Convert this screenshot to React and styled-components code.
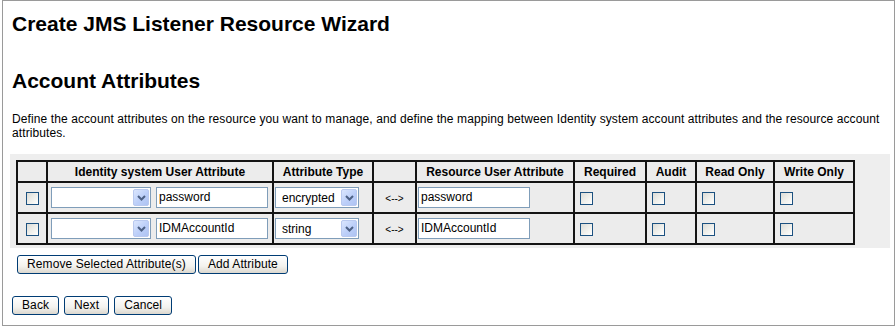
import React from "react";
import styled, { createGlobalStyle } from "styled-components";

// GLOBAL
const GlobalStyle = createGlobalStyle`
  html, body {
    margin: 0;
    padding: 0;
    background: #ffffff;
  }
  body {
    font-family: "Liberation Sans", Arial, sans-serif;
    font-size: 12px;
    color: #000000;
  }
`;

//DATA
const columns = [
  { label: "", width: 30 },
  { label: "Identity system User Attribute", width: 226 },
  { label: "Attribute Type", width: 100 },
  { label: "", width: 43 },
  { label: "Resource User Attribute", width: 158 },
  { label: "Required", width: 72 },
  { label: "Audit", width: 50 },
  { label: "Read Only", width: 78 },
  { label: "Write Only", width: 80 },
];

const rows = [
  { name: "password", type: "encrypted", resource: "password" },
  { name: "IDMAccountId", type: "string", resource: "IDMAccountId" },
];

const Chevron = () => (
  <svg width="9" height="6" viewBox="0 0 9 6">
    <path d="M1 1 L4.5 4.5 L8 1" fill="none" stroke="#4d6185" strokeWidth="2" />
  </svg>
);

const Select = ({ value, width }) => (
  <StyledSelect $width={width}>
    <span>{value}</span>
    <DropButton>
      <Chevron />
    </DropButton>
  </StyledSelect>
);

const App = () => {
  return (
    <>
      <GlobalStyle />
      <StyledFrame>
        <Title>Create JMS Listener Resource Wizard</Title>
        <SubTitle>Account Attributes</SubTitle>
        <Description>
          Define the account attributes on the resource you want to manage, and
          define the mapping between Identity system account attributes and the
          resource account attributes.
        </Description>

        <StyledPanel>
          <StyledTable>
            <colgroup>
              {columns.map((c, i) => (
                <col key={i} style={{ width: c.width }} />
              ))}
            </colgroup>
            <thead>
              <tr>
                {columns.map((c, i) => (
                  <HeadCell key={i}>{c.label}</HeadCell>
                ))}
              </tr>
            </thead>
            <tbody>
              {rows.map((r) => (
                <tr key={r.name}>
                  <Cell $center>
                    <Checkbox />
                  </Cell>
                  <Cell $pad="0 3px">
                    <Pair>
                      <Select value="" width={100} />
                      <TextField readOnly value={r.name} />
                    </Pair>
                  </Cell>
                  <Cell $pad="0 1px">
                    <Select value={r.type} width={84} />
                  </Cell>
                  <Cell $center>
                    <Arrow>&lt;--&gt;</Arrow>
                  </Cell>
                  <Cell $pad="0 1px">
                    <TextField readOnly value={r.resource} />
                  </Cell>
                  <Cell $pad="0 5px">
                    <Checkbox />
                  </Cell>
                  <Cell $pad="0 5px">
                    <Checkbox />
                  </Cell>
                  <Cell $pad="0 5px">
                    <Checkbox />
                  </Cell>
                  <Cell $pad="0 5px">
                    <Checkbox />
                  </Cell>
                </tr>
              ))}
            </tbody>
          </StyledTable>
        </StyledPanel>

        <ButtonRow $indent={7} $top={7} $gap={2}>
          <Button>Remove Selected Attribute(s)</Button>
          <Button>Add Attribute</Button>
        </ButtonRow>

        <ButtonRow $indent={2} $top={22} $gap={5}>
          <Button>Back</Button>
          <Button>Next</Button>
          <Button>Cancel</Button>
        </ButtonRow>
      </StyledFrame>
    </>
  );
};

const StyledFrame = styled.div`
  box-sizing: border-box;
  width: 893px;
  height: 326px;
  margin-left: 2px;
  border: 1px solid #9a9a9a;
  padding: 0 7px;
  overflow: hidden;
`;

const Title = styled.h1`
  margin: 12px 0 0 2px;
  font-size: 21px;
  line-height: 22px;
  font-weight: bold;
`;

const SubTitle = styled.h2`
  margin: 35px 0 0 2px;
  font-size: 21px;
  line-height: 22px;
  font-weight: bold;
`;

const Description = styled.p`
  margin: 20px 0 0 2px;
  width: 878px;
  font-size: 12px;
  line-height: 14px;
  letter-spacing: 0.1px;
`;

const StyledPanel = styled.div`
  margin-top: 14px;
  width: 880px;
  box-sizing: border-box;
  padding: 6px 6px 3px 6px;
  background: #eeeeee;
`;

const StyledTable = styled.table`
  table-layout: fixed;
  width: 837px;
  border-collapse: collapse;
  border: 2px solid #141414;
  background: #ececec;
`;

const HeadCell = styled.th`
  height: 19px;
  padding: 0;
  border: 2px solid #141414;
  font-size: 12px;
  font-weight: bold;
  text-align: center;
  vertical-align: middle;
  white-space: nowrap;
`;

const Cell = styled.td`
  height: 29px;
  padding: ${(p) => p.$pad || "0"};
  border: 2px solid #141414;
  text-align: ${(p) => (p.$center ? "center" : "left")};
  vertical-align: middle;
`;

const Pair = styled.div`
  display: flex;
  align-items: center;
  gap: 5px;
`;

const StyledSelect = styled.div`
  box-sizing: border-box;
  width: ${(p) => p.$width}px;
  height: 21px;
  display: flex;
  align-items: center;
  justify-content: space-between;
  border: 1px solid #7f9db9;
  background: #ffffff;
  padding: 0 1px 0 6px;
  font-size: 12px;
  span {
    line-height: 19px;
    padding-top: 2px;
  }
`;

const DropButton = styled.div`
  box-sizing: border-box;
  width: 16px;
  height: 17px;
  display: flex;
  align-items: center;
  justify-content: center;
  border: 1px solid #b9c9ef;
  border-radius: 2px;
  background: linear-gradient(135deg, #dbe6fd 0%, #bccff9 55%, #aec3f2 100%);
`;

const TextField = styled.input`
  box-sizing: border-box;
  width: 112px;
  height: 21px;
  margin: 0;
  padding: 0 2px 2px 2px;
  border: 1px solid #7f9db9;
  background: #ffffff;
  font-family: "Liberation Sans", Arial, sans-serif;
  font-size: 12px;
  color: #000000;
  outline: none;
`;

const Checkbox = styled.span`
  display: inline-block;
  box-sizing: border-box;
  width: 13px;
  height: 13px;
  vertical-align: middle;
  border: 1px solid #1c5180;
  background: linear-gradient(135deg, #dcdcd7 0%, #f2f2ee 60%, #ffffff 100%);
`;

const Arrow = styled.span`
  font-size: 10px;
`;

const ButtonRow = styled.div`
  display: flex;
  gap: ${(p) => p.$gap}px;
  margin: ${(p) => p.$top}px 0 0 ${(p) => p.$indent}px;
`;

const Button = styled.button`
  box-sizing: border-box;
  height: 19px;
  padding: 0 9px;
  border: 1px solid #003c74;
  border-radius: 3px;
  background: linear-gradient(180deg, #ffffff 0%, #f3f2ee 60%, #dcd8cf 100%);
  font-family: "Liberation Sans", Arial, sans-serif;
  font-size: 12px;
  line-height: 17px;
  letter-spacing: 0.1px;
  color: #000000;
`;

export default App;
